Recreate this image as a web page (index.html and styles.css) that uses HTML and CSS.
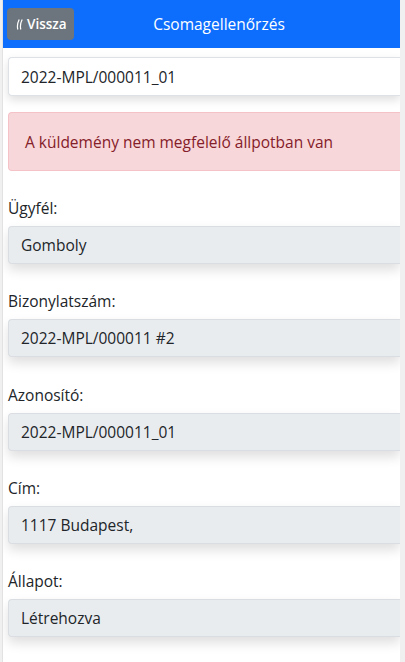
FILE: index.html
```html
<!DOCTYPE html>
<html lang="hu">
<head>
<meta charset="utf-8">
<title>Csomagellenőrzés</title>
<link rel="stylesheet" href="styles.css">
</head>
<body>
<div class="app">
  <header class="topbar">
    <button class="back-btn" type="button"><svg class="chev" width="7" height="11" viewBox="0 0 7 11"><path d="M3.2 0.5 Q0.6 5.5 1.8 10.5 M6.2 0.5 Q3.6 5.5 4.8 10.5" fill="none" stroke="#fff" stroke-width="1.2"/></svg>Vissza</button>
    <h1 class="title">Csomagellenőrzés</h1>
  </header>
  <main class="content">
    <input class="scan-input" type="text" value="2022-MPL/000011_01">
    <div class="alert">A küldemény nem megfelelő állpotban van</div>
    <div class="field">
      <label class="field-label">Ügyfél:</label>
      <div class="field-value">Gomboly</div>
    </div>
    <div class="field">
      <label class="field-label">Bizonylatszám:</label>
      <div class="field-value">2022-MPL/000011 #2</div>
    </div>
    <div class="field">
      <label class="field-label">Azonosító:</label>
      <div class="field-value">2022-MPL/000011_01</div>
    </div>
    <div class="field">
      <label class="field-label">Cím:</label>
      <div class="field-value">1117 Budapest,</div>
    </div>
    <div class="field">
      <label class="field-label">Állapot:</label>
      <div class="field-value">Létrehozva</div>
    </div>
  </main>
</div>
</body>
</html>
```

FILE: styles.css
```css
* { box-sizing: border-box; }
html, body { margin: 0; padding: 0; }
body {
  background: #f0f0f0;
  font-family: "Open Sans", "Noto Sans", sans-serif;
  font-size: 16px;
  line-height: 24px;
  color: #212529;
}
.app {
  margin-left: 2px;
  width: 398px;
  min-height: 662px;
  background: #fff;
  border-left: 1px solid #e2e2e2;
  overflow: hidden;
}
.topbar {
  height: 48px;
  background: #0d6efd;
  display: flex;
  align-items: center;
  padding-left: 4px;
}
.back-btn {
  height: 32px;
  width: 67px;
  background: #6c757d;
  color: #fff;
  border: none;
  border-radius: 4px;
  font-family: inherit;
  font-size: 13.5px;
  font-weight: 600;
  padding: 0 0 0 9px;
  display: flex;
  align-items: center;
  gap: 4px;
}
.chev { display: block; margin-top: 1px; }
.title {
  flex: 1;
  margin: 0 0 0 -36px;
  text-align: center;
  font-size: 15.5px;
  font-weight: 400;
  color: #fff;
}
.content {
  padding: 9px 0 0 5px;
  display: flex;
  flex-direction: column;
}
.scan-input {
  height: 39px;
  width: 100%;
  border: 1px solid #dee2e6;
  border-right: none;
  border-radius: 4px 0 0 4px;
  padding: 0 12px;
  font-family: inherit;
  font-size: 15.5px;
  color: #212529;
  background: #fff;
  box-shadow: 0 4px 10px rgba(0,0,0,.13);
  outline: none;
}
.alert {
  margin-top: 16px;
  height: 59px;
  display: flex;
  align-items: center;
  padding: 0 16px;
  background: #f8d7da;
  border: 1px solid #f5c2c7;
  border-right: none;
  border-radius: 4px 0 0 4px;
  color: #842029;
  font-size: 15.5px;
}
.field {
  margin-top: 25.25px;
  display: flex;
  flex-direction: column;
  gap: 6px;
}
.alert + .field { margin-top: 25px; }
.field-label {
  font-size: 15.5px;
  line-height: 24px;
}
.field-value {
  height: 38px;
  display: flex;
  align-items: center;
  padding: 0 12px;
  background: #e9ecef;
  border: 1px solid #dadee2;
  border-right: none;
  border-radius: 4px 0 0 4px;
  font-size: 15.5px;
  box-shadow: 0 6px 12px rgba(0,0,0,.13);
}
```
